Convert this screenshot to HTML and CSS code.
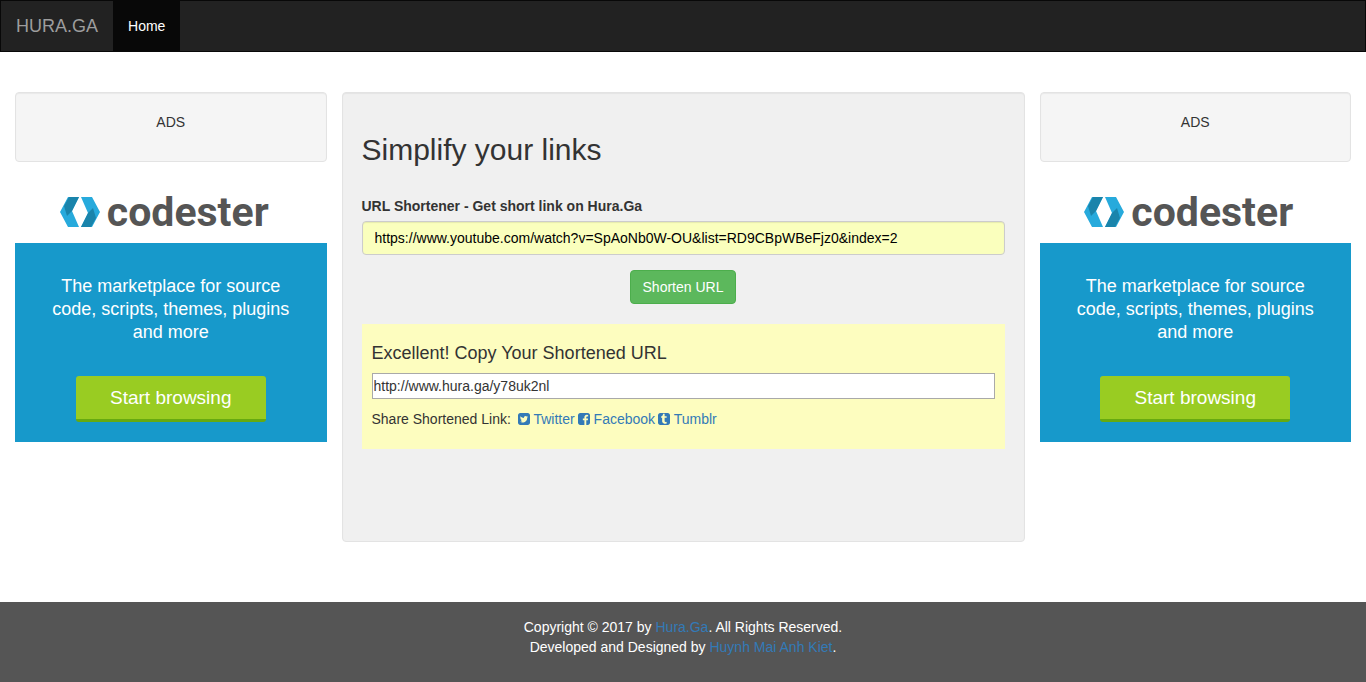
FILE: index.html
```html
<!DOCTYPE html>
<html lang="en">
<head>
  <meta charset="UTF-8" />
  <meta name="viewport" content="width=device-width, initial-scale=1.0" />
  <title>Hura.Ga - URL Shortener</title>
  <link rel="stylesheet" href="styles.css">
</head>
<body>
  <nav class="navbar">
    <a class="brand" href="#">HURA.GA</a>
    <a class="nav-link active" href="#">Home</a>
  </nav>

  <div class="row">
    <aside class="side">
      <div class="well"><p>ADS</p></div>
      <div class="banner">
        <div class="banner-logo">
          <svg width="40" height="30" viewBox="0 0 40 30" aria-hidden="true">
            <path fill="#27aadc" d="M8 0h11l-7 14 7 16H8L0 15z" />
            <path fill="#1a84ab" d="M9 0h10l-7 14-5 5-3-10z" />
            <path fill="#27aadc" d="M32 30H21l7-14-7-16h11l8 15z" />
            <path fill="#1a84ab" d="M31 30H21l7-14 5-5 3 10z" />
          </svg>
          <span>codester</span>
        </div>
        <div class="banner-body">
          <p>The marketplace for source<br>code, scripts, themes, plugins<br>and more</p>
          <a class="banner-btn" href="#">Start browsing</a>
        </div>
      </div>
    </aside>

    <main class="well main">
      <h2>Simplify your links</h2>
      <form>
        <label for="url">URL Shortener - Get short link on Hura.Ga</label>
        <input type="text" id="url" class="form-control" value="https://www.youtube.com/watch?v=SpAoNb0W-OU&amp;list=RD9CBpWBeFjz0&amp;index=2" />
        <button type="button" class="btn">Shorten URL</button>
      </form>
      <div class="result">
        <h4><label for="short">Excellent! Copy Your Shortened URL</label></h4>
        <input type="text" id="short" class="short-url" value="http://www.hura.ga/y78uk2nl" />
        <div class="share">
          <span>Share Shortened Link:</span>
          <a href="#"><svg class="icon" viewBox="128 128 1536 1536" aria-hidden="true"><path d="M1408 610q-56 25-121 34 68-40 93-117-65 38-134 51-61-66-153-66-87 0-148.5 61.5t-61.5 148.5q0 29 5 48-129-7-242-65t-192-155q-29 50-29 106 0 114 91 175-47-1-100-26v1q0 75 50 133.5t123 72.5q-29 8-51 8-13 0-39-4 21 63 74.5 104t121.5 42q-116 90-261 90-26 0-50-3 148 94 322 94 112 0 210-35.5t168-95 120.5-137 75-162 24.5-168.5q0-18-1-27 63-45 105-109zm256-194v960q0 119-84.5 203.5t-203.5 84.5h-960q-119 0-203.5-84.5t-84.5-203.5v-960q0-119 84.5-203.5t203.5-84.5h960q119 0 203.5 84.5t84.5 203.5z" /></svg> Twitter</a>
          <a href="#"><svg class="icon" viewBox="128 128 1536 1536" aria-hidden="true"><path d="M1376 128q119 0 203.5 84.5t84.5 203.5v960q0 119-84.5 203.5t-203.5 84.5h-188v-595h199l30-232h-229v-148q0-56 23.5-84t91.5-28l122-1v-207q-63-9-178-9-136 0-217.5 80t-81.5 226v171h-200v232h200v595h-532q-119 0-203.5-84.5t-84.5-203.5v-960q0-119 84.5-203.5t203.5-84.5h960z" /></svg> Facebook</a>
          <a href="#"><svg class="icon" viewBox="128 128 1536 1536" aria-hidden="true"><path d="M1264 1427l-62-183q-44 22-103 22-36 1-62-10.5t-38.5-31.5-17.5-40.5-5-43.5v-398h257v-194h-256v-326h-188q-8 0-9 10-5 44-17.5 87t-39 95-77 95-118.5 68v165h130v418q0 57 21.5 115t65 111 121 85.5 176.5 30.5q69-1 136.5-25t85.5-50zm400-1011v960q0 119-84.5 203.5t-203.5 84.5h-960q-119 0-203.5-84.5t-84.5-203.5v-960q0-119 84.5-203.5t203.5-84.5h960q119 0 203.5 84.5t84.5 203.5z" /></svg> Tumblr</a>
        </div>
      </div>
    </main>

    <aside class="side">
      <div class="well"><p>ADS</p></div>
      <div class="banner">
        <div class="banner-logo">
          <svg width="40" height="30" viewBox="0 0 40 30" aria-hidden="true">
            <path fill="#27aadc" d="M8 0h11l-7 14 7 16H8L0 15z" />
            <path fill="#1a84ab" d="M9 0h10l-7 14-5 5-3-10z" />
            <path fill="#27aadc" d="M32 30H21l7-14-7-16h11l8 15z" />
            <path fill="#1a84ab" d="M31 30H21l7-14 5-5 3 10z" />
          </svg>
          <span>codester</span>
        </div>
        <div class="banner-body">
          <p>The marketplace for source<br>code, scripts, themes, plugins<br>and more</p>
          <a class="banner-btn" href="#">Start browsing</a>
        </div>
      </div>
    </aside>
  </div>

  <footer class="footer">
    <p>Copyright © 2017 by <a href="#">Hura.Ga</a>. All Rights Reserved.<br>
    Developed and Designed by <a href="#">Huynh Mai Anh Kiet</a>.</p>
  </footer>
</body>
</html>
```
FILE: styles.css
```css
* {
  box-sizing: border-box;
}
body {
  margin: 0;
  font-family: "Liberation Sans", Arial, sans-serif;
  font-size: 14px;
  line-height: 20px;
  color: #333;
  background-color: #fff;
}
a {
  color: #337ab7;
  text-decoration: none;
}
p {
  margin: 0 0 10px;
}
.navbar {
  display: flex;
  background-color: #222;
  border: 1px solid #080808;
  margin-bottom: 40px;
}
.brand {
  padding: 15px;
  font-size: 18px;
  color: #9d9d9d;
}
.nav-link {
  padding: 15px;
  color: #9d9d9d;
}
.nav-link.active {
  color: #fff;
  background-color: #080808;
}
.row {
  display: grid;
  grid-template-columns: minmax(0, 1fr) minmax(0, 2fr) minmax(0, 1fr);
  margin-bottom: 40px;
}
.side {
  padding: 0 15px;
  text-align: center;
}
.well {
  padding: 19px;
  margin-bottom: 20px;
  background-color: #f5f5f5;
  border: 1px solid #e3e3e3;
  border-radius: 4px;
  box-shadow: inset 0 1px 1px rgba(0, 0, 0, 0.05);
}
.main {
  min-height: 450px;
  background-color: #f0f0f0;
}
h2 {
  margin: 20px 0 28px;
  font-size: 30px;
  line-height: 36px;
  font-weight: 500;
}
form label {
  display: block;
  margin-bottom: 5px;
  font-weight: bold;
}
.form-control {
  display: block;
  width: 100%;
  height: 34px;
  padding: 6px 12px;
  font: inherit;
  color: #000;
  background-color: #faffbd;
  border: 1px solid #ccc;
  border-radius: 4px;
  box-shadow: inset 0 1px 1px rgba(0, 0, 0, 0.08);
}
.btn {
  display: block;
  margin: 15px auto 20px;
  padding: 6px 12px;
  font: inherit;
  color: #fff;
  background-color: #5cb85c;
  border: 1px solid #4cae4c;
  border-radius: 4px;
  cursor: pointer;
}
.result {
  padding: 10px;
  background-color: #fdfdbf;
}
h4 {
  margin: 9px 0 10px;
  font-size: 18px;
  font-weight: 500;
}
.short-url {
  display: block;
  width: 100%;
  height: 26px;
  margin-bottom: 10px;
  padding: 1px;
  font: inherit;
  color: #333;
  background-color: #fff;
  border: 1px solid #a9a9a9;
}
.share {
  display: flex;
  flex-wrap: wrap;
  gap: 3px;
  margin-bottom: 10px;
}
.share span {
  margin-right: 4px;
}
.icon {
  width: 12px;
  height: 12px;
  vertical-align: -1px;
  fill: currentColor;
}

/* ad banner */
.banner-logo {
  display: flex;
  align-items: center;
  justify-content: center;
  gap: 7px;
  height: 61px;
  padding: 0 13px 2px 0;
  font-family: Roboto, sans-serif;
  font-size: 41px;
  font-weight: bold;
  color: #555;
}
.banner-body {
  padding: 32px 15px 20px;
  color: #fff;
  background-color: #1799cb;
}
.banner-body p {
  margin-bottom: 32px;
  font-size: 18px;
  line-height: 23px;
}
.banner-btn {
  display: block;
  max-width: 190px;
  margin: 0 auto;
  padding: 10px;
  font-size: 19px;
  line-height: 23px;
  color: #fff;
  background-color: #9c2;
  border-bottom: 3px solid #6a1;
  border-radius: 3px;
}

.footer {
  padding: 15px;
  text-align: center;
  color: #fff;
  background-color: #555;
}
```
